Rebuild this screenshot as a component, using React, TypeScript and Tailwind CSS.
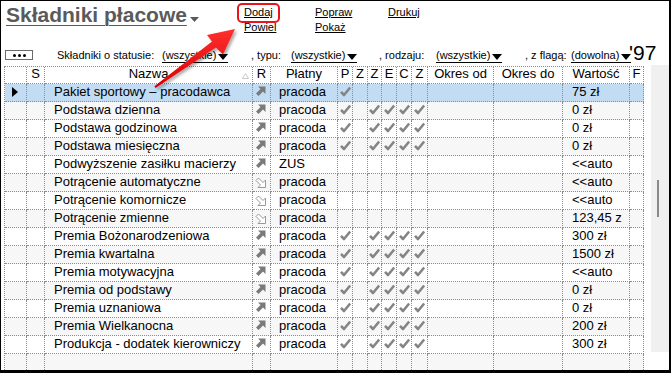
import React from 'react';

type Wiersz = {
  nazwa: string;
  kierunek: 'gora' | 'dol';
  platny: string;
  znaczniki: 'p' | 'wszystkie' | 'brak';
  wartosc: string;
};

const wiersze: Wiersz[] = [
  { nazwa: 'Pakiet sportowy – pracodawca', kierunek: 'gora', platny: 'pracoda', znaczniki: 'p', wartosc: '75 zł' },
  { nazwa: 'Podstawa dzienna', kierunek: 'gora', platny: 'pracoda', znaczniki: 'wszystkie', wartosc: '0 zł' },
  { nazwa: 'Podstawa godzinowa', kierunek: 'gora', platny: 'pracoda', znaczniki: 'wszystkie', wartosc: '0 zł' },
  { nazwa: 'Podstawa miesięczna', kierunek: 'gora', platny: 'pracoda', znaczniki: 'wszystkie', wartosc: '0 zł' },
  { nazwa: 'Podwyższenie zasiłku macierzy', kierunek: 'gora', platny: 'ZUS', znaczniki: 'brak', wartosc: '<<auto' },
  { nazwa: 'Potrącenie automatyczne', kierunek: 'dol', platny: 'pracoda', znaczniki: 'brak', wartosc: '<<auto' },
  { nazwa: 'Potrącenie komornicze', kierunek: 'dol', platny: 'pracoda', znaczniki: 'brak', wartosc: '<<auto' },
  { nazwa: 'Potrącenie zmienne', kierunek: 'dol', platny: 'pracoda', znaczniki: 'brak', wartosc: '123,45 z' },
  { nazwa: 'Premia Bożonarodzeniowa', kierunek: 'gora', platny: 'pracoda', znaczniki: 'wszystkie', wartosc: '300 zł' },
  { nazwa: 'Premia kwartalna', kierunek: 'gora', platny: 'pracoda', znaczniki: 'wszystkie', wartosc: '1500 zł' },
  { nazwa: 'Premia motywacyjna', kierunek: 'gora', platny: 'pracoda', znaczniki: 'wszystkie', wartosc: '<<auto' },
  { nazwa: 'Premia od podstawy', kierunek: 'gora', platny: 'pracoda', znaczniki: 'wszystkie', wartosc: '0 zł' },
  { nazwa: 'Premia uznaniowa', kierunek: 'gora', platny: 'pracoda', znaczniki: 'wszystkie', wartosc: '0 zł' },
  { nazwa: 'Premia Wielkanocna', kierunek: 'gora', platny: 'pracoda', znaczniki: 'wszystkie', wartosc: '200 zł' },
  { nazwa: 'Produkcja - dodatek kierowniczy', kierunek: 'gora', platny: 'pracoda', znaczniki: 'wszystkie', wartosc: '300 zł' },
];

const naglowki = ['', 'S', 'Nazwa', 'R', 'Płatny', 'P', 'Z', 'Z', 'E', 'C', 'Z', 'Okres od', 'Okres do', 'Wartość', 'F'];

const komorka =
  'border-r border-b border-dotted border-[#8c8c8c] overflow-hidden whitespace-nowrap text-[13px]';

const Ptaszek = () => (
  <svg width="11" height="11" viewBox="0 0 11 11" className="mx-auto mt-[2px]">
    <path d="M1 5.8 L4 9 L10.2 1.5" fill="none" stroke="#858585" strokeWidth="2.6" strokeLinejoin="round" />
  </svg>
);

const StrzalkaGora = () => (
  <svg width="11" height="11" viewBox="0 0 11 11" className="ml-[2px] mt-[2px]">
    <path d="M3 0.5H10.5V8L8 5.5 3.5 10 1 7.5 5.5 3z" fill="#7a7a7a" />
  </svg>
);

const StrzalkaDol = () => (
  <svg width="11" height="11" viewBox="0 0 11 11" className="ml-[2px] mt-[3px]">
    <path d="M1 3.5 3.5 1 8 5.5 10.5 3v7.5H3L5.5 8z" fill="#fff" stroke="#9a9a9a" strokeWidth="1" />
  </svg>
);

const Rozwin = () => (
  <svg width="10" height="6" viewBox="0 0 10 6" className="ml-[2px] mb-[2px]">
    <path d="M0 0h10L5 6z" fill="#000" />
  </svg>
);

const Lista = ({ tekst, szer }: { tekst: string; szer: string }) => (
  <span className={`${szer} shrink-0`}>
    <span className="inline-flex items-end border-b border-black leading-[13px]">
      {tekst}
      <Rozwin />
    </span>
  </span>
);

function Wiersz({ w, i }: { w: Wiersz; i: number }) {
  const tlo = i === 0 ? 'bg-[#c1dcf3]' : i % 2 === 1 ? 'bg-[#f7f7f7]' : 'bg-white';
  const c = `${komorka} h-[18px] leading-[15px] ${tlo}`;
  const kol = [false, false, false, false, false, false];
  if (w.znaczniki === 'p') kol[0] = true;
  if (w.znaczniki === 'wszystkie') [0, 2, 3, 4, 5].forEach((k) => (kol[k] = true));
  return (
    <>
      <div className={c}>
        {i === 0 && (
          <svg width="6" height="10" viewBox="0 0 6 10" className="ml-[7px] mt-[3px]">
            <path d="M0 0 6 5 0 10z" fill="#000" />
          </svg>
        )}
      </div>
      <div className={c} />
      <div className={`${c} pl-[9px]`}>{w.nazwa}</div>
      <div className={c}>{w.kierunek === 'gora' ? <StrzalkaGora /> : <StrzalkaDol />}</div>
      <div className={`${c} pl-[8px]`}>{w.platny}</div>
      {kol.map((on, k) => (
        <div key={k} className={c}>
          {on && <Ptaszek />}
        </div>
      ))}
      <div className={c} />
      <div className={c} />
      <div className={`${c} pl-[9px]`}>{w.wartosc}</div>
      <div className={c} />
    </>
  );
}

export default function App() {
  return (
    <div className="relative w-[671px] h-[373px] overflow-hidden bg-white border-t border-l border-r-2 border-b-[3px] border-black font-['Liberation_Sans',Arial,sans-serif] text-black">
      {/* Nagłówek */}
      <div className="flex h-[47px] items-start">
        <div className="ml-[5px] mt-[2px] flex items-start w-[238px] shrink-0">
          <span className="text-[21px] leading-[24px] font-bold text-[#5a5a5a] underline underline-offset-[3px] decoration-1">
            Składniki płacowe
          </span>
          <svg width="9" height="5" viewBox="0 0 9 5" className="ml-[3px] mt-[14px]">
            <path d="M0 0h9L4.5 5z" fill="#5a5a5a" />
          </svg>
        </div>
        <div className="flex flex-col gap-[2px] mt-[5px] text-[11px] leading-[13px] w-[71px] shrink-0">
          <span className="underline">Dodaj</span>
          <span className="underline">Powiel</span>
        </div>
        <div className="flex flex-col gap-[2px] mt-[5px] text-[11px] leading-[13px] w-[73px] shrink-0">
          <span className="underline">Popraw</span>
          <span className="underline">Pokaż</span>
        </div>
        <div className="mt-[5px] text-[11px] leading-[13px]">
          <span className="underline">Drukuj</span>
        </div>
      </div>

      {/* Filtry */}
      <div className="flex items-start h-[18px] pt-[1px] text-[11px] leading-[13px]">
        <span className="ml-[4px] w-[28px] h-[10px] mt-[1px] border border-[#6a6a6a] flex items-center justify-center gap-[2px] shrink-0">
          <span className="w-[3px] h-[3px] rounded-full bg-black" />
          <span className="w-[3px] h-[3px] rounded-full bg-black" />
          <span className="w-[3px] h-[3px] rounded-full bg-black" />
        </span>
        <span className="ml-[24px] w-[105px] shrink-0">Składniki o statusie:</span>
        <Lista tekst="(wszystkie)" szer="w-[89px]" />
        <span className="w-[40px] shrink-0">, typu:</span>
        <Lista tekst="(wszystkie)" szer="w-[88px]" />
        <span className="w-[57px] shrink-0">, rodzaju:</span>
        <Lista tekst="(wszystkie)" szer="w-[89px]" />
        <span className="w-[46px] shrink-0">, z flagą:</span>
        <Lista tekst="(dowolna)" szer="w-[58px]" />
        <span className="-mt-[7px] text-[21px] leading-[21px] shrink-0">'97</span>
      </div>

      {/* Tabela */}
      <div className="flex">
        <div className="ml-[3px] border-l border-t border-dotted border-[#8c8c8c] grid grid-cols-[22px_18px_208px_18px_67px_15px_15px_14px_15px_15px_16px_66px_69px_67px_14px] shrink-0">
          {naglowki.map((n, k) => (
            <div key={k} className={`${komorka} h-[17px] leading-[14px] text-center bg-white relative`}>
              {n}
              {n === 'Nazwa' && (
                <svg width="7" height="6" viewBox="0 0 7 6" className="absolute right-[3px] top-[6px]">
                  <path d="M3.5 0.5 6.5 5.5H0.5z" fill="#fff" stroke="#c8c8c8" strokeWidth="1" />
                </svg>
              )}
            </div>
          ))}
          {wiersze.map((w, i) => (
            <Wiersz key={i} w={w} i={i} />
          ))}
          {naglowki.map((_, k) => (
            <div key={k} className={`${komorka} h-[18px] bg-[#f7f7f7]`} />
          ))}
        </div>
        <div className="ml-[7px] -mt-[1px] w-[18px] h-[287px] bg-[#f0f0f0] shrink-0">
          <div className="ml-[6px] mt-[115px] w-[2px] h-[37px] bg-[#8a8a8a]" />
        </div>
      </div>

      {/* Adnotacje */}
      <div className="absolute left-[236px] top-[2px] w-[43px] h-[20px] border-2 border-[#e8161b] rounded-[5px] pointer-events-none" />
      <svg className="absolute left-0 top-0 pointer-events-none" width="671" height="373" viewBox="-1 -1 671 373">
        <defs>
          <linearGradient id="czerwony" x1="0" y1="0" x2="0" y2="1">
            <stop offset="0" stopColor="#ff3030" />
            <stop offset="1" stopColor="#d80000" />
          </linearGradient>
          <filter id="cien" x="-20%" y="-20%" width="140%" height="140%">
            <feDropShadow dx="2" dy="2" stdDeviation="1.5" floodColor="#000" floodOpacity="0.35" />
          </filter>
        </defs>
        <polygon
          points="233,27 205,33 210,39.4 152.4,84.2 153.6,86 214,45.5 221,52.5"
          fill="url(#czerwony)"
          filter="url(#cien)"
        />
      </svg>
    </div>
  );
}
